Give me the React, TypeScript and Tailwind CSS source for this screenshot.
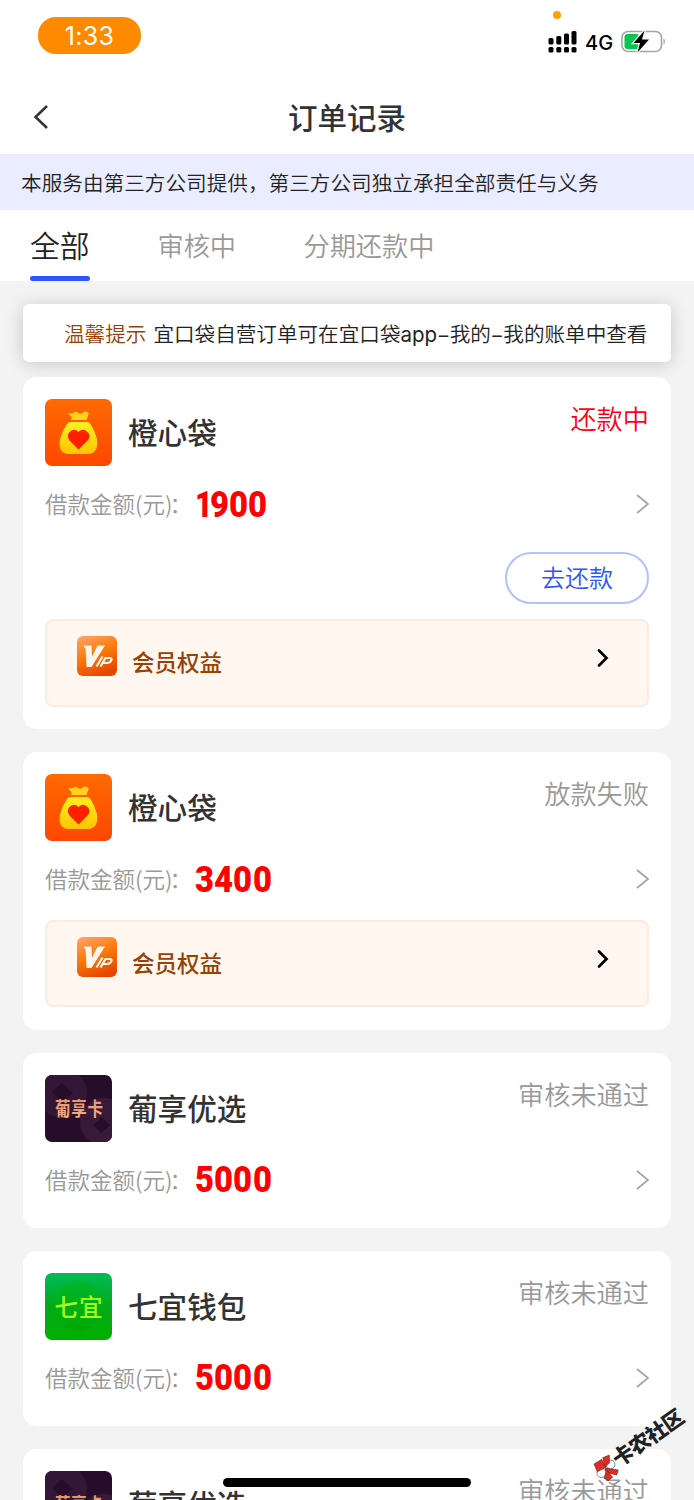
import React from 'react';

type Brand = 'orange' | 'grape' | 'seven';

interface Order {
  brand: Brand;
  name: string;
  amount: string;
  status: string;
  active?: boolean;
  vip?: boolean;
}

const orders: Order[] = [
  { brand: 'orange', name: '橙心袋', amount: '1900', status: '还款中', active: true, vip: true },
  { brand: 'orange', name: '橙心袋', amount: '3400', status: '放款失败', vip: true },
  { brand: 'grape', name: '葡享优选', amount: '5000', status: '审核未通过' },
  { brand: 'seven', name: '七宜钱包', amount: '5000', status: '审核未通过' },
  { brand: 'grape', name: '葡享优选', amount: '5000', status: '审核未通过' },
];

function OrangeLogo() {
  return (
    <svg viewBox="0 0 67 67" className="size-[67px]">
      <defs>
        <linearGradient id="og" x1="0" y1="0" x2="0" y2="1">
          <stop offset="0" stopColor="#ff6a00" />
          <stop offset="1" stopColor="#ff4700" />
        </linearGradient>
        <linearGradient id="bag" x1="0" y1="0" x2="0" y2="1">
          <stop offset="0" stopColor="#fff01c" />
          <stop offset="1" stopColor="#ffc400" />
        </linearGradient>
      </defs>
      <rect width="67" height="67" rx="7" fill="url(#og)" />
      <path d="M23.500 15 Q24 13 26.500 14.500 Q29 13.500 30.500 12.500 Q32.500 13.500 34.500 14.800 Q37 15 39 12.500 Q44 12 43.500 15.500 L41.500 21 H26 L26.500 18 Z" fill="#ffd21c" />
      <path d="M25.500 23 H42 Q44 23 45.500 25 Q50 32 52 40 Q53 48 50 52 Q47.500 55 43 55 H24 Q19 55 16.500 52 Q13.500 48 15 40 Q17 32 22 25 Q23.500 23 25.500 23 Z" fill="url(#bag)" />
      <path d="M33.500 50.500 L24.500 41.500 Q21.500 37 24 33.500 Q28.500 28.500 33.500 33 Q38.500 28.500 43 33.500 Q46 37 43 41 Z" fill="#ff2000" />
    </svg>
  );
}

function GrapeLogo() {
  return (
    <svg viewBox="0 0 67 67" className="size-[67px]">
      <defs>
        <clipPath id="gc"><rect width="67" height="67" rx="7" /></clipPath>
        <linearGradient id="gt" x1="0" y1="0" x2="0" y2="1">
          <stop offset="0" stopColor="#e88a5c" />
          <stop offset="1" stopColor="#f3b98f" />
        </linearGradient>
      </defs>
      <g clipPath="url(#gc)">
        <rect width="67" height="67" fill="#260e2b" />
        <circle cx="17" cy="18" r="25" fill="#321737" />
        <path d="M7 17 L17 8 L28 18 L17 27 Z" fill="#260e2b" />
        <circle cx="59" cy="47" r="24" fill="#381a38" />
        <path d="M48 50 L57 42 L65 50 L56 58 Z" fill="#260e2b" />
      </g>
      <g transform="translate(10 41) scale(1 1.240)">
        <text x="0" y="0" textLength="48" fontSize="15.500" fontWeight="700" fill="url(#gt)" fontFamily="'Noto Sans CJK SC', sans-serif" lengthAdjust="spacing">葡享卡</text>
      </g>
    </svg>
  );
}

function SevenLogo() {
  return (
    <svg viewBox="0 0 67 67" className="size-[67px]">
      <defs>
        <linearGradient id="sg" x1="0" y1="0" x2="0" y2="1">
          <stop offset="0" stopColor="#00bb58" />
          <stop offset="0.5" stopColor="#00aa18" />
          <stop offset="1" stopColor="#00b000" />
        </linearGradient>
        <linearGradient id="sc" x1="0" y1="0" x2="0" y2="1">
          <stop offset="0" stopColor="#00b62c" />
          <stop offset="1" stopColor="#00a805" />
        </linearGradient>
      </defs>
      <rect width="67" height="67" rx="7" fill="url(#sg)" />
      <circle cx="33.500" cy="33" r="24.500" fill="url(#sc)" />
      <text x="9.500" y="43" textLength="48" fontSize="23.500" fontWeight="500" fill="#a4ff1a" fontFamily="'Noto Sans CJK SC', sans-serif" lengthAdjust="spacing">七宜</text>
    </svg>
  );
}

function VipIcon() {
  return (
    <svg viewBox="0 0 40 40" className="size-10">
      <defs>
        <linearGradient id="vg" x1="0.200" y1="0" x2="0.600" y2="1">
          <stop offset="0" stopColor="#ffa063" />
          <stop offset="0.480" stopColor="#fb7a08" />
          <stop offset="1" stopColor="#e44600" />
        </linearGradient>
      </defs>
      <rect width="40" height="40" rx="6" fill="url(#vg)" />
      <path d="M7 9.500 H14.500 L15 20.500 L20.500 9.500 H28 L14.500 31 H9.500 L8.500 11.500 H7 Z" fill="#fff5ec" />
      <path d="M25.500 20.500 L19.500 30.500 M27.500 22 H33 Q35.500 22 34 25 Q32.500 27 30 27 H26.500 M28.500 22 L23.500 30.500" fill="none" stroke="#fff5ec" strokeWidth="2.200" />
    </svg>
  );
}

function Chevron() {
  return (
    <svg viewBox="0 0 14 20" className="h-5 w-3.5" fill="none" stroke="#a6a6a6" strokeWidth="1.800">
      <path d="M1 1 L12 10 L1 19" />
    </svg>
  );
}

function Amount({ value }: { value: string }) {
  return (
    <span className="ml-[5px] flex h-9 items-center font-['Roboto'] text-[36px] leading-9 font-black text-[#ff0000]">
      {value.split('').map((d, i) => (
        <span key={i} className={d === '1' ? 'w-[14.800px]' : 'w-[19.200px]'}>
          <span className={d === '1' ? 'inline-block origin-left scale-x-[0.840]' : 'inline-block origin-left scale-x-[0.910]'}>{d}</span>
        </span>
      ))}
    </span>
  );
}

function OrderCard({ order }: { order: Order }) {
  return (
    <section className={order.vip ? 'rounded-[14px] bg-white px-[22px] pt-[22px] pb-[22.500px]' : 'rounded-[14px] bg-white px-[22px] pt-[22px] pb-[29.500px]'}>
      <div className="flex h-[67.500px] items-start">
        {order.brand === 'orange' && <OrangeLogo />}
        {order.brand === 'grape' && <GrapeLogo />}
        {order.brand === 'seven' && <SevenLogo />}
        <h2 className="ml-4 flex-1 text-[29.600px] leading-[65px] font-medium text-[#333]">{order.name}</h2>
        <span className={order.active ? 'text-[26.200px] leading-[38px] font-[350] text-[#ff0015]' : 'text-[26.200px] leading-[38px] font-[350] text-[#999]'}>
          {order.status}
        </span>
      </div>
      <div className="mt-5 flex h-9 items-center">
        <span className="mt-[-3px] w-[145px] text-[22.500px] leading-9 font-[350] whitespace-nowrap text-[#999]">
          借款金额(元)<span className="-ml-[3px]">：</span>
        </span>
        <Amount value={order.amount} />
        <span className="mt-[-1px] mr-[-1px] ml-auto"><Chevron /></span>
      </div>
      {order.active && (
        <div className="mt-[29.500px] flex justify-end">
          <button className="h-[52px] w-36 rounded-full border-2 border-[#b4c1ff] pb-[3px] text-2xl font-[350] text-[#2c56f6]">去还款</button>
        </div>
      )}
      {order.vip && (
        <div className={order.active ? 'mt-[15px] flex h-[87.500px] items-start rounded-lg border-2 border-[#ffeadf] bg-[#fff7f0] pt-[14.500px] pr-[38px] pl-[30px]' : 'mt-[22.500px] flex h-[87px] items-start rounded-lg border-2 border-[#ffeadf] bg-[#fff7f0] pt-[14.500px] pr-[38px] pl-[30px]'}>
          <VipIcon />
          <span className="ml-[15px] pt-[7px] text-[22.500px] leading-9 font-medium text-[#984100]">会员权益</span>
          <svg viewBox="0 0 12 20" className="mt-[12.500px] ml-auto h-5 w-3" fill="none" stroke="#000" strokeWidth="2.700" strokeLinecap="round">
            <path d="M2 2.500 L9.500 10 L2 17.500" />
          </svg>
        </div>
      )}
    </section>
  );
}

function StatusBar() {
  return (
    <div className="relative flex h-20 justify-between pt-[17px] pr-7 pl-[38px]">
      <div className="flex h-[37px] w-[103px] items-center justify-center rounded-[18px] bg-[#ff8a00] pt-0.5 font-['Inter'] text-[25px] tracking-[0.300px] text-white">1:33</div>
      <span className="absolute top-[11px] left-[553px] size-2 rounded-full bg-[#ffa000]" />
      <div className="mt-[13px] flex h-6 items-center">
        <svg viewBox="0 0 30 24" className="h-6 w-[30px]" fill="#000">
          <rect x="1.500" y="8" width="5" height="6.500" rx="1.500" />
          <rect x="9.300" y="6" width="5" height="8.500" rx="1.500" />
          <rect x="17" y="3.500" width="5" height="11" rx="1.500" />
          <rect x="24.500" y="1" width="5" height="13.500" rx="1.500" />
          <rect x="1.500" y="17" width="5" height="5.500" rx="1.500" />
          <rect x="9.300" y="17" width="5" height="5.500" rx="1.500" />
          <rect x="17" y="17" width="5" height="5.500" rx="1.500" />
          <rect x="24.500" y="17" width="5" height="5.500" rx="1.500" />
        </svg>
        <span className="ml-2 w-[27px] pt-px font-['Inter'] text-[20px] leading-6 font-[450] text-black">4G</span>
        <svg viewBox="0 0 46 24" className="ml-2 h-6 w-[46px]">
          <rect x="2" y="1.500" width="39.500" height="20" rx="6" fill="#fff" stroke="#a4a4a4" strokeWidth="1.600" />
          <path d="M43.500 8 Q46.500 11.500 43.500 15 Z" fill="#a4a4a4" />
          <rect x="4.500" y="4" width="15" height="15" rx="3" fill="#00c84e" />
          <path d="M24.500 0.500 L13.500 13 H20 L17.500 22.500 L29 9.500 H22 Z" fill="#000" stroke="#fff" strokeWidth="2.500" paintOrder="stroke" />
        </svg>
      </div>
    </div>
  );
}

export default function App() {
  return (
    <main lang="zh-CN" className="relative h-[1500px] w-[694px] overflow-hidden bg-[#f3f3f3] font-['Noto_Sans_CJK_SC',sans-serif]">
      <header className="h-[154px] bg-white">
        <StatusBar />
        <div className="flex h-[74px] items-center pr-[30px] pl-[30px]">
          <svg viewBox="0 0 20 26" className="h-[26px] w-5" fill="none" stroke="#333" strokeWidth="2.500">
            <path d="M17 2 L5.500 13 L17 24" />
          </svg>
          <h1 className="mt-[-2px] mr-5 flex-1 text-center text-[29.500px] leading-[74px] font-medium text-[#333]">订单记录</h1>
        </div>
      </header>
      <p className="h-14 bg-[#eaedff] pl-[21px] text-[20.640px] leading-[56px] font-[350] whitespace-nowrap text-[#222]">
        本服务由第三方公司提供，第三方公司独立承担全部责任与义务
      </p>
      <nav className="flex h-[71px] bg-white pl-[30px] leading-[71px] font-[350] text-[#999]">
        <div className="relative w-[60px] text-[29.800px] leading-[68px] text-[#222]">
          全部
          <span className="absolute bottom-0 left-0 h-[5px] w-full rounded-full bg-[#2c56f6]" />
        </div>
        <span className="ml-[67.500px] w-20 text-[26.200px]">审核中</span>
        <span className="ml-[66px] text-[26.200px]">分期还款中</span>
      </nav>
      <div className="mx-[23px] mt-[23px] h-[58px] rounded-md bg-white pl-[41px] text-[20.600px] leading-[58px] font-[350] whitespace-nowrap text-[#222] shadow-[0_2px_18px_rgba(0,0,0,0.180)]">
        <span className="mr-[7px] text-[#984100]">温馨提示</span>
        宜口袋自营订单可在宜口袋<span className="font-['Inter'] text-[20.500px] font-normal">app</span>
        <span className="inline-block w-[12.500px] text-center font-['Inter'] text-[19px] font-normal">–</span>我的
        <span className="inline-block w-[12.500px] text-center font-['Inter'] text-[19px] font-normal">–</span>我的账单中查看
      </div>
      <div className="relative mx-[23px] mt-[15px] flex flex-col gap-[23px]">
        {orders.map((o, i) => <OrderCard key={i} order={o} />)}
      </div>
      <div className="absolute top-[1478px] left-[223px] h-[9px] w-[248px] rounded-full bg-black" />
      <svg viewBox="0 0 110 90" className="absolute top-[1400px] left-[584px] h-[90px] w-[110px]">
        <g stroke="#222" strokeWidth="0.500">
          <circle cx="26.500" cy="64.500" r="4.500" fill="#fff" />
          <circle cx="17.500" cy="73" r="4.500" fill="#fff" />
          <path d="M10 64 L17.700 59.300 L22 67.300 L13.300 71.700 Z" fill="#e52a20" />
          <path d="M18.700 57.700 L25.300 55 L25.500 62.700 L21.500 67 Z" fill="#e52a20" />
          <path d="M22 68 L34.300 70 L32.700 75 L24.300 73 Z" fill="#e52a20" />
          <path d="M21 68 L22 72 L20 78.300 L24.300 80.700 L28.700 77.300 L23.500 71 Z" fill="#e52a20" />
        </g>
        <g transform="translate(18 69.500) rotate(-35)">
          <text x="15" y="8" fontSize="21" fontWeight="900" textLength="82" fill="#222" stroke="#fff" strokeWidth="0.800" paintOrder="stroke" fontFamily="'Noto Sans CJK SC', sans-serif">卡农社区</text>
        </g>
      </svg>
    </main>
  );
}
